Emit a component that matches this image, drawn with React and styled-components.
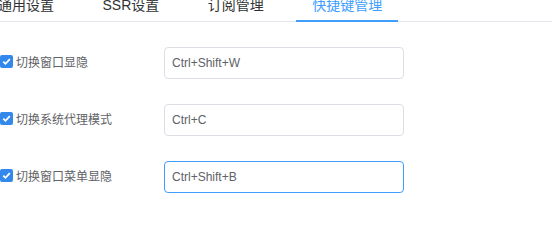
import React, { useState } from 'react';
import styled, { createGlobalStyle } from 'styled-components';

const GlobalStyle = createGlobalStyle`
  body {
    margin: 0;
    background: #fff;
    font-family: "Liberation Sans", "Noto Sans CJK SC", sans-serif;
    overflow: hidden;
  }
`;

const Page = styled.div`
  width: 552px;
  height: 248px;
  overflow: hidden;
`;

const TabNav = styled.div`
  display: flex;
  gap: 16.5px;
  height: 34px;
  margin: -13px 0 0 -18px;
  border-bottom: 1px solid #e4e7ed;
`;

const Tab = styled.div`
  position: relative;
  padding: 0 16px;
  line-height: 36px;
  font-size: 14px;
  color: ${(p) => (p.$active ? '#409eff' : '#303133')};
  white-space: nowrap;

  &:after {
    content: "";
    display: ${(p) => (p.$active ? 'block' : 'none')};
    position: absolute;
    left: 0;
    right: 0;
    bottom: -1px;
    height: 2px;
    background: #409eff;
  }
`;

const Form = styled.div`
  display: flex;
  flex-direction: column;
  gap: 25px;
  padding-top: 25px;
`;

const Row = styled.div`
  display: flex;
  align-items: center;
`;

const Label = styled.label`
  display: flex;
  align-items: center;
  gap: 3px;
  width: 164px;
  margin-top: -3px;
  font-size: 12px;
  color: #606266;
`;

const Box = styled.span`
  display: inline-flex;
  align-items: center;
  justify-content: center;
  width: 13px;
  height: 13px;
  border-radius: 2px;
  background: #3388ec;
`;

const Input = styled.input`
  box-sizing: border-box;
  width: 240px;
  height: 32px;
  padding: 0 7px;
  border: 1px solid ${(p) => (p.$focused ? '#409eff' : '#dcdfe6')};
  border-radius: 4px;
  font-family: inherit;
  font-size: 12px;
  color: #606266;
  outline: none;
`;

const Check = () => (
  <Box>
    <svg width="9" height="9" viewBox="0 0 9 9">
      <path d="M1.3 4.6 L3.5 6.8 L7.8 2.2" stroke="#fff" strokeWidth="1.8" fill="none" />
    </svg>
  </Box>
);

const tabs = ['通用设置', 'SSR设置', '订阅管理', '快捷键管理'];

const rows = [
  { label: '切换窗口显隐', key: 'Ctrl+Shift+W' },
  { label: '切换系统代理模式', key: 'Ctrl+C' },
  { label: '切换窗口菜单显隐', key: 'Ctrl+Shift+B', focused: true },
];

export default function App() {
  const [values, setValues] = useState(rows.map((r) => r.key));
  return (
    <Page>
      <GlobalStyle />
      <TabNav>
        {tabs.map((t, i) => (
          <Tab key={t} $active={i === 3}>{t}</Tab>
        ))}
      </TabNav>
      <Form>
        {rows.map((r, i) => (
          <Row key={r.label}>
            <Label>
              <Check />
              {r.label}
            </Label>
            <Input
              $focused={r.focused}
              value={values[i]}
              onChange={(e) => {
                const next = [...values];
                next[i] = e.target.value;
                setValues(next);
              }}
            />
          </Row>
        ))}
      </Form>
    </Page>
  );
}
